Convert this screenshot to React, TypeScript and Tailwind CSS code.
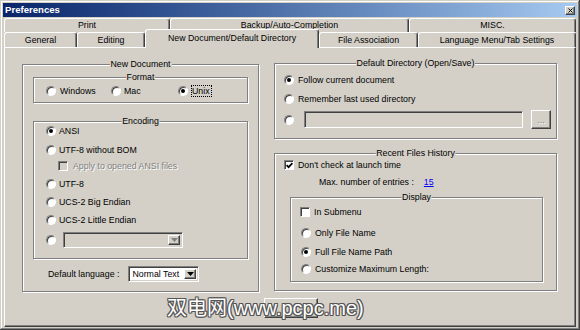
import React from "react";

const RAISED =
  "bg-[#d4d0c8] border border-t-white border-l-white border-r-[#404040] border-b-[#404040] shadow-[inset_-1px_-1px_0_#808080]";
const SUNKEN =
  "border border-t-[#808080] border-l-[#808080] border-r-white border-b-white shadow-[inset_1px_1px_0_#404040,inset_-1px_-1px_0_#d4d0c8]";

const Radio = ({ checked = false }: { checked?: boolean }) => (
  <span className="flex items-center justify-center w-[10px] h-[10px] shrink-0 rounded-full bg-white border border-t-[#808080] border-l-[#808080] border-r-white border-b-white shadow-[inset_1px_1px_0_#404040]">
    {checked && <span className="w-[4px] h-[4px] rounded-full bg-black" />}
  </span>
);

const Check = ({ checked = false, disabled = false }: { checked?: boolean; disabled?: boolean }) => (
  <span
    className={`flex items-center justify-center w-[10px] h-[10px] shrink-0 border border-t-[#808080] border-l-[#808080] border-r-white border-b-white shadow-[inset_1px_1px_0_#404040] ${
      disabled ? "bg-[#d4d0c8]" : "bg-white"
    }`}
  >
    {checked && (
      <svg width="7" height="7" viewBox="0 0 7 7">
        <path d="M0.6 3.2 L2.6 5.2 L6.4 1.2" stroke="black" strokeWidth="1.7" fill="none" />
      </svg>
    )}
  </span>
);

const Row = ({ className = "", children }: { className?: string; children: React.ReactNode }) => (
  <div className={`flex items-center h-[12px] ${className}`}>{children}</div>
);

const Group = ({
  title,
  className = "",
  children,
}: {
  title: string;
  className?: string;
  children: React.ReactNode;
}) => (
  <div className={`relative border border-[#808080] shadow-[inset_1px_1px_0_#fff,1px_1px_0_#fff] ${className}`}>
    <span className="absolute left-1/2 -translate-x-1/2 top-[-6px] px-[1px] bg-[#d4d0c8] leading-[11px] whitespace-nowrap">
      {title}
    </span>
    {children}
  </div>
);

const Arrow = ({ color }: { color: string }) => (
  <svg width="7" height="4" viewBox="0 0 7 4">
    <path d="M0 0 H7 L3.5 4 Z" fill={color} />
  </svg>
);

const Combo = ({
  text,
  className = "",
  disabled = false,
}: {
  text?: string;
  className?: string;
  disabled?: boolean;
}) => (
  <div className={`flex p-[2px] ${SUNKEN} ${disabled ? "bg-[#d4d0c8]" : "bg-white"} ${className}`}>
    <span className="flex-1 flex items-center pl-[1px] leading-[10px] whitespace-nowrap">{text}</span>
    <span className={`w-[12px] flex items-center justify-center ${RAISED}`}>
      <Arrow color={disabled ? "#808080" : "#000"} />
    </span>
  </div>
);

const Tab = ({
  label,
  className = "",
}: {
  label: string;
  className?: string;
}) => (
  <div
    className={`flex items-center justify-center shrink-0 bg-[#d4d0c8] border-t border-l border-r border-t-white border-l-white border-r-[#404040] rounded-t-[3px] shadow-[inset_-1px_0_0_#808080] whitespace-nowrap ${className}`}
  >
    {label}
  </div>
);

export default function App() {
  return (
    <div className="relative w-[580px] h-[330px] overflow-hidden bg-[#d4d0c8] p-[3px] flex flex-col text-black text-[8.8px] leading-[11px] font-['Liberation_Sans',Arial,sans-serif] shadow-[inset_-1px_-1px_0_#404040,inset_1px_1px_0_#d4d0c8,inset_-2px_-2px_0_#808080,inset_2px_2px_0_#fff]">
      {/* Title bar */}
      <div className="h-[14px] shrink-0 flex items-center justify-between bg-linear-to-r from-[#0a246a] to-[#a6caf0]">
        <span className="pl-[2px] text-white font-bold text-[9.6px] leading-[12px]">Preferences</span>
        <span className={`w-[10px] h-[9px] mr-[2px] flex items-center justify-center ${RAISED}`}>
          <svg width="5" height="5" viewBox="0 0 5 5">
            <path d="M0.5 0.5 L4.5 4.5 M4.5 0.5 L0.5 4.5" stroke="#000" strokeWidth="1" />
          </svg>
        </span>
      </div>

      {/* Tab rows */}
      <div className="flex pl-[1px] mt-[1px] h-[14px] shrink-0">
        <Tab label="Print" className="w-[166px] h-[14px]" />
        <Tab label="Backup/Auto-Completion" className="w-[239px] h-[14px]" />
        <Tab label="MISC." className="w-[167px] h-[14px]" />
      </div>
      <div className="relative z-10 flex items-end pl-[1px] h-[15px] shrink-0">
        <Tab label="General" className="w-[73px] h-[15px] pt-[1px]" />
        <Tab label="Editing" className="w-[68px] h-[15px] pt-[1px]" />
        <Tab label="New Document/Default Directory" className="w-[174px] h-[19px] -mb-[1px] pb-[2px]" />
        <Tab label="File Association" className="w-[99px] h-[15px] pt-[1px]" />
        <Tab label="Language Menu/Tab Settings" className="w-[158px] h-[15px] pt-[1px]" />
      </div>

      {/* Panel */}
      <div className="flex-1 mx-[1px] flex flex-col border border-t-white border-l-white border-r-[#404040] border-b-[#404040] shadow-[inset_-1px_-1px_0_#808080]">
        <div className="flex items-start pl-[17px] gap-[15px]">
          {/* Left column */}
          <div className="mt-[16px]">
            <Group title="New Document" className="w-[237px] h-[228px] flex flex-col">
              <Group title="Format" className="ml-[10px] mt-[12px] w-[215px] h-[26px] flex items-center pl-[12px] pt-[2px]">
                <div className="flex items-center w-[65px]">
                  <Radio />
                  <span className="ml-[4px]">Windows</span>
                </div>
                <div className="flex items-center w-[67px]">
                  <Radio />
                  <span className="ml-[3px]">Mac</span>
                </div>
                <div className="flex items-center">
                  <Radio checked />
                  <span className="ml-[3px] border border-dotted border-black leading-[10px] pr-[1px]">Unix</span>
                </div>
              </Group>

              <Group title="Encoding" className="ml-[10px] mt-[18px] w-[215px] h-[138px] flex flex-col pl-[12px]">
                <Row className="mt-[3px]">
                  <Radio checked />
                  <span className="ml-[3px]">ANSI</span>
                </Row>
                <Row className="mt-[7px]">
                  <Radio />
                  <span className="ml-[3px]">UTF-8 without BOM</span>
                </Row>
                <Row className="mt-[4px] ml-[12px]">
                  <Check disabled />
                  <span className="ml-[5px] text-[#808080] [text-shadow:1px_1px_0_#fff]">Apply to opened ANSI files</span>
                </Row>
                <Row className="mt-[6px]">
                  <Radio />
                  <span className="ml-[3px]">UTF-8</span>
                </Row>
                <Row className="mt-[6px]">
                  <Radio />
                  <span className="ml-[3px]">UCS-2 Big Endian</span>
                </Row>
                <Row className="mt-[6px]">
                  <Radio />
                  <span className="ml-[3px]">UCS-2 Little Endian</span>
                </Row>
                <div className="flex items-center mt-[6px] h-[16px]">
                  <Radio />
                  <Combo disabled className="ml-[7px] w-[120px] h-[16px]" />
                </div>
              </Group>

              <div className="flex items-center mt-[7px] h-[16px] pl-[25px]">
                <span>Default language :</span>
                <Combo text="Normal Text" className="ml-[9px] w-[71px] h-[16px]" />
              </div>
            </Group>
          </div>

          {/* Right column */}
          <div className="mt-[15px] flex flex-col">
            <Group title="Default Directory (Open/Save)" className="w-[283px] h-[76px] flex flex-col pl-[9px]">
              <Row className="mt-[10px]">
                <Radio checked />
                <span className="ml-[4px]">Follow current document</span>
              </Row>
              <Row className="mt-[7px]">
                <Radio />
                <span className="ml-[4px]">Remember last used directory</span>
              </Row>
              <div className="flex items-center mt-[6px] h-[17px]">
                <Radio />
                <div className={`ml-[10px] w-[219px] h-[17px] bg-[#d4d0c8] ${SUNKEN}`} />
                <div className={`ml-[8px] w-[20px] h-[19px] flex items-center justify-center text-[#808080] [text-shadow:1px_1px_0_#fff] leading-[10px] ${RAISED}`}>
                  ...
                </div>
              </div>
            </Group>

            <Group title="Recent Files History" className="mt-[14px] w-[283px] h-[138px] flex flex-col pl-[9px]">
              <Row className="mt-[5px]">
                <Check checked />
                <span className="ml-[4px]">Don't check at launch time</span>
              </Row>
              <Row className="mt-[5px] pl-[35px]">
                <span>Max. number of entries :</span>
                <span className="ml-[10px] text-[#0000ff] underline">15</span>
              </Row>
              <Group title="Display" className="mt-[9px] ml-[6px] w-[253px] h-[85px] flex flex-col pl-[9px]">
                <Row className="mt-[8px]">
                  <Check />
                  <span className="ml-[4px]">In Submenu</span>
                </Row>
                <Row className="mt-[9px] ml-[1px]">
                  <Radio />
                  <span className="ml-[4px]">Only File Name</span>
                </Row>
                <Row className="mt-[7px] ml-[1px]">
                  <Radio checked />
                  <span className="ml-[4px]">Full File Name Path</span>
                </Row>
                <Row className="mt-[5px] ml-[1px]">
                  <Radio />
                  <span className="ml-[4px]">Customize Maximum Length:</span>
                </Row>
              </Group>
            </Group>
          </div>
        </div>

        <div className={`ml-[259px] mt-[6px] w-[54px] h-[20px] ${RAISED}`} />
      </div>

      {/* Watermark */}
      <div className="absolute left-[167px] top-[297px] text-[20px] leading-[22px] text-white whitespace-nowrap font-['Liberation_Sans','Noto_Sans_CJK_SC',sans-serif] [text-shadow:-1px_-1px_0_#555,1px_-1px_0_#555,-1px_1px_0_#555,1px_1px_0_#555,0_1px_0_#555,0_-1px_0_#555,1px_0_0_#555,-1px_0_0_#555]">
        双电网(www.pcpc.me)
      </div>
    </div>
  );
}
